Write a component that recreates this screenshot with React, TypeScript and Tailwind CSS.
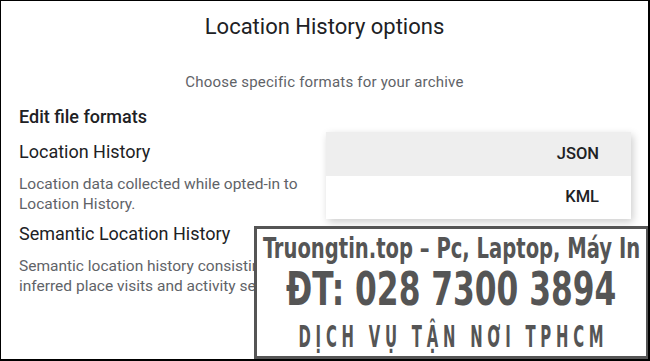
import React from "react";

export default function App() {
  return (
    <div className="relative w-[650px] h-[361px] bg-white border border-black border-r-2 border-b-2 overflow-hidden text-[#202124]" style={{ fontFamily: "Roboto, 'Noto Sans', sans-serif" }}>
      <div className="flex flex-col">
        <h1 className="text-center text-[22px] leading-[28px] pt-[12px] font-normal text-[#202124]">Location History options</h1>
        <p className="text-center text-[15px] leading-[20px] tracking-[0.2px] mt-[31px] text-[#5f6368]">Choose specific formats for your archive</p>
        <div className="pl-[18px] mt-[13px] flex flex-col">
          <h2 className="text-[18px] font-medium leading-[24px] text-[#202124]">Edit file formats</h2>
          <h3 className="text-[18px] leading-[24px] mt-[11px] text-[#202124]">Location History</h3>
          <p className="text-[15.5px] leading-[20px] mt-[10px] text-[#5f6368] whitespace-nowrap">Location data collected while opted-in to<br />Location History.</p>
          <h3 className="text-[18px] leading-[24px] mt-[8px] text-[#202124]">Semantic Location History</h3>
          <p className="text-[15.5px] leading-[20px] mt-[10px] text-[#5f6368] whitespace-nowrap">Semantic location history consisting of<br />inferred place visits and activity segments.</p>
        </div>
      </div>

      <div className="absolute left-[325px] top-[131px] w-[305px] bg-white shadow-[2px_3px_8px_rgba(0,0,0,0.2)] flex flex-col">
        <div className="h-[44px] bg-[#eeeeee] flex items-center justify-end pr-[32px] text-[16.5px] font-medium text-[#202124]">JSON</div>
        <div className="h-[43px] flex items-center justify-end pr-[32px] text-[16.5px] font-medium text-[#202124]">KML</div>
      </div>

      <div className="absolute left-[253px] top-[225px] w-[395px] h-[133px] bg-white border-[3px] border-[#555555] flex flex-col items-center text-[#555555] font-bold" style={{ fontFamily: "'DejaVu Sans Condensed', 'DejaVu Sans', sans-serif", fontStretch: "condensed" }}>
        <div className="h-[34px] mt-[2px] w-full flex items-center justify-center overflow-visible">
          <span className="inline-block shrink-0 whitespace-nowrap text-[29px] leading-[34px] scale-x-[0.75]">Truongtin.top – Pc, Laptop, Máy In</span>
        </div>
        <div className="h-[48px] w-full flex items-center justify-center overflow-visible">
          <span className="inline-block shrink-0 whitespace-nowrap text-[47px] leading-[48px] scale-x-[0.74]">ĐT: 028 7300 3894</span>
        </div>
        <div className="h-[40px] mt-[4px] w-full flex items-center justify-center overflow-visible">
          <span className="inline-block shrink-0 whitespace-nowrap text-[30px] leading-[40px] scale-x-[0.55] tracking-[0.29em] pl-[0.29em]">DỊCH VỤ TẬN NƠI TPHCM</span>
        </div>
      </div>
    </div>
  );
}
